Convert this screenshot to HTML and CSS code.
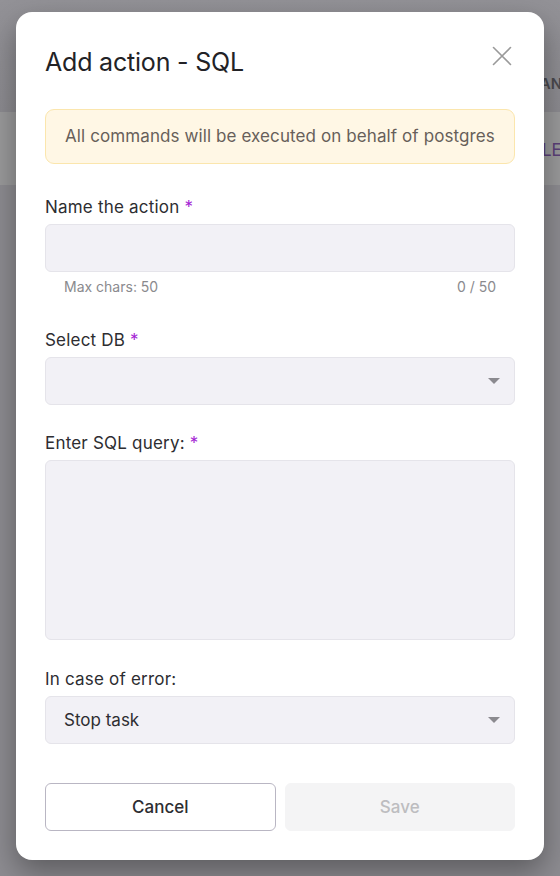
FILE: index.html
```html
<!DOCTYPE html>
<html lang="en">
<head>
<meta charset="utf-8">
<title>Add action - SQL</title>
<link rel="stylesheet" href="styles.css">
</head>
<body>
<div class="page">
  <div class="page-header"><span class="page-header-text">RAN</span></div>
  <div class="page-band"><span class="page-band-text">LE</span></div>
</div>

<div class="modal">
  <div class="modal-head">
    <h1 class="modal-title">Add action - SQL</h1>
    <button class="close-btn" aria-label="Close">
      <svg width="20" height="20" viewBox="0 0 20 20"><path d="M1.5 1.5 L18.5 18.5 M18.5 1.5 L1.5 18.5" stroke="#9a9a9a" stroke-width="1.6" fill="none" stroke-linecap="round"/></svg>
    </button>
  </div>

  <div class="alert">All commands will be executed on behalf of postgres</div>

  <div class="field field-first">
    <label class="label">Name the action <span class="req">*</span></label>
    <div class="input"></div>
    <div class="helper"><span>Max chars: 50</span><span>0 / 50</span></div>
  </div>

  <div class="field field-db">
    <label class="label">Select DB <span class="req">*</span></label>
    <div class="input select"><span class="select-value"></span><span class="caret"></span></div>
  </div>

  <div class="field field-sql">
    <label class="label">Enter SQL query: <span class="req">*</span></label>
    <div class="input textarea"></div>
  </div>

  <div class="field">
    <label class="label">In case of error:</label>
    <div class="input select"><span class="select-value">Stop task</span><span class="caret"></span></div>
  </div>

  <div class="actions">
    <button class="btn btn-cancel">Cancel</button>
    <button class="btn btn-save">Save</button>
  </div>
</div>
</body>
</html>
```
FILE: styles.css
```css
html, body {
  margin: 0;
  padding: 0;
  height: 100%;
  overflow: hidden;
}
body {
  background: #8d8c91;
  font-family: Inter, "Noto Sans", "Liberation Sans", sans-serif;
  position: relative;
}
.page-header {
  height: 112px;
  background: linear-gradient(#939297, #8c8b90);
  display: flex;
  align-items: flex-end;
  padding: 0 0 19px 530px;
  box-sizing: border-box;
  white-space: nowrap;
}
.page-header-text {
  font-size: 15px;
  line-height: 18px;
  font-weight: 600;
  color: #4a494e;
}
.page-band {
  height: 73px;
  background: #9a9a9b;
  display: flex;
  align-items: center;
  padding-left: 542px;
  box-sizing: border-box;
  white-space: nowrap;
}
.page-band-text {
  font-size: 17px;
  color: #5b3f78;
  margin-top: 2px;
}

.modal {
  position: absolute;
  left: 16px;
  top: 12px;
  width: 528px;
  height: 848px;
  box-sizing: border-box;
  background: #fff;
  border-radius: 16px;
  box-shadow: 0 12px 30px rgba(0,0,0,0.35);
  padding: 34px 29px 30px;
  display: flex;
  flex-direction: column;
}
.modal-head {
  display: flex;
  justify-content: space-between;
  align-items: center;
  height: 32px;
}
.modal-title {
  margin: 0;
  font-size: 25px;
  line-height: 32px;
  font-weight: 400;
  letter-spacing: -0.2px;
  color: #222226;
}
.close-btn {
  border: 0;
  background: none;
  padding: 0;
  width: 20px;
  height: 20px;
  margin-right: 3px;
  margin-top: -12px;
  cursor: pointer;
}
.close-btn svg { display: block; }

.alert {
  margin-top: 31px;
  background: #fff7e5;
  border: 1px solid #fbe6ad;
  border-radius: 9px;
  padding: 15px 19px;
  font-size: 17px;
  line-height: 23px;
  color: #675f5a;
  letter-spacing: 0.1px;
}

.field { margin-top: 27px; }
.field-first { margin-top: 31px; }
.field-db { margin-top: 32px; }
.field-sql { margin-top: 26px; }
.label {
  display: block;
  font-size: 17px;
  line-height: 24px;
  color: #2d2d31;
  margin-bottom: 5px;
  letter-spacing: 0.2px;
}
.req { color: #a41fd4; }
.input {
  height: 48px;
  box-sizing: border-box;
  background: #f2f1f6;
  border: 1px solid #e5e4ea;
  border-radius: 6px;
}
.textarea { height: 180px; }
.helper {
  display: flex;
  justify-content: space-between;
  padding: 0 19px;
  margin-top: 6px;
  font-size: 14px;
  line-height: 18px;
  color: #8a8a8e;
}
.select {
  display: flex;
  align-items: center;
  justify-content: space-between;
  padding: 0 14px 0 18px;
}
.select-value {
  font-size: 17px;
  color: #2d2d31;
}
.caret {
  width: 0;
  height: 0;
  border-left: 6px solid transparent;
  border-right: 6px solid transparent;
  border-top: 6px solid #8b8a8f;
}

.actions {
  margin-top: 39px;
  display: flex;
  gap: 9px;
}
.btn {
  flex: 1;
  height: 48px;
  border-radius: 6px;
  font-family: inherit;
  font-size: 17px;
  font-weight: 500;
  cursor: pointer;
}
.btn-cancel {
  background: #fff;
  border: 1px solid #b9b6c3;
  color: #2d2d31;
}
.btn-save {
  background: #f4f4f5;
  border: 1px solid #f4f4f5;
  color: #bdbdc0;
}
```
